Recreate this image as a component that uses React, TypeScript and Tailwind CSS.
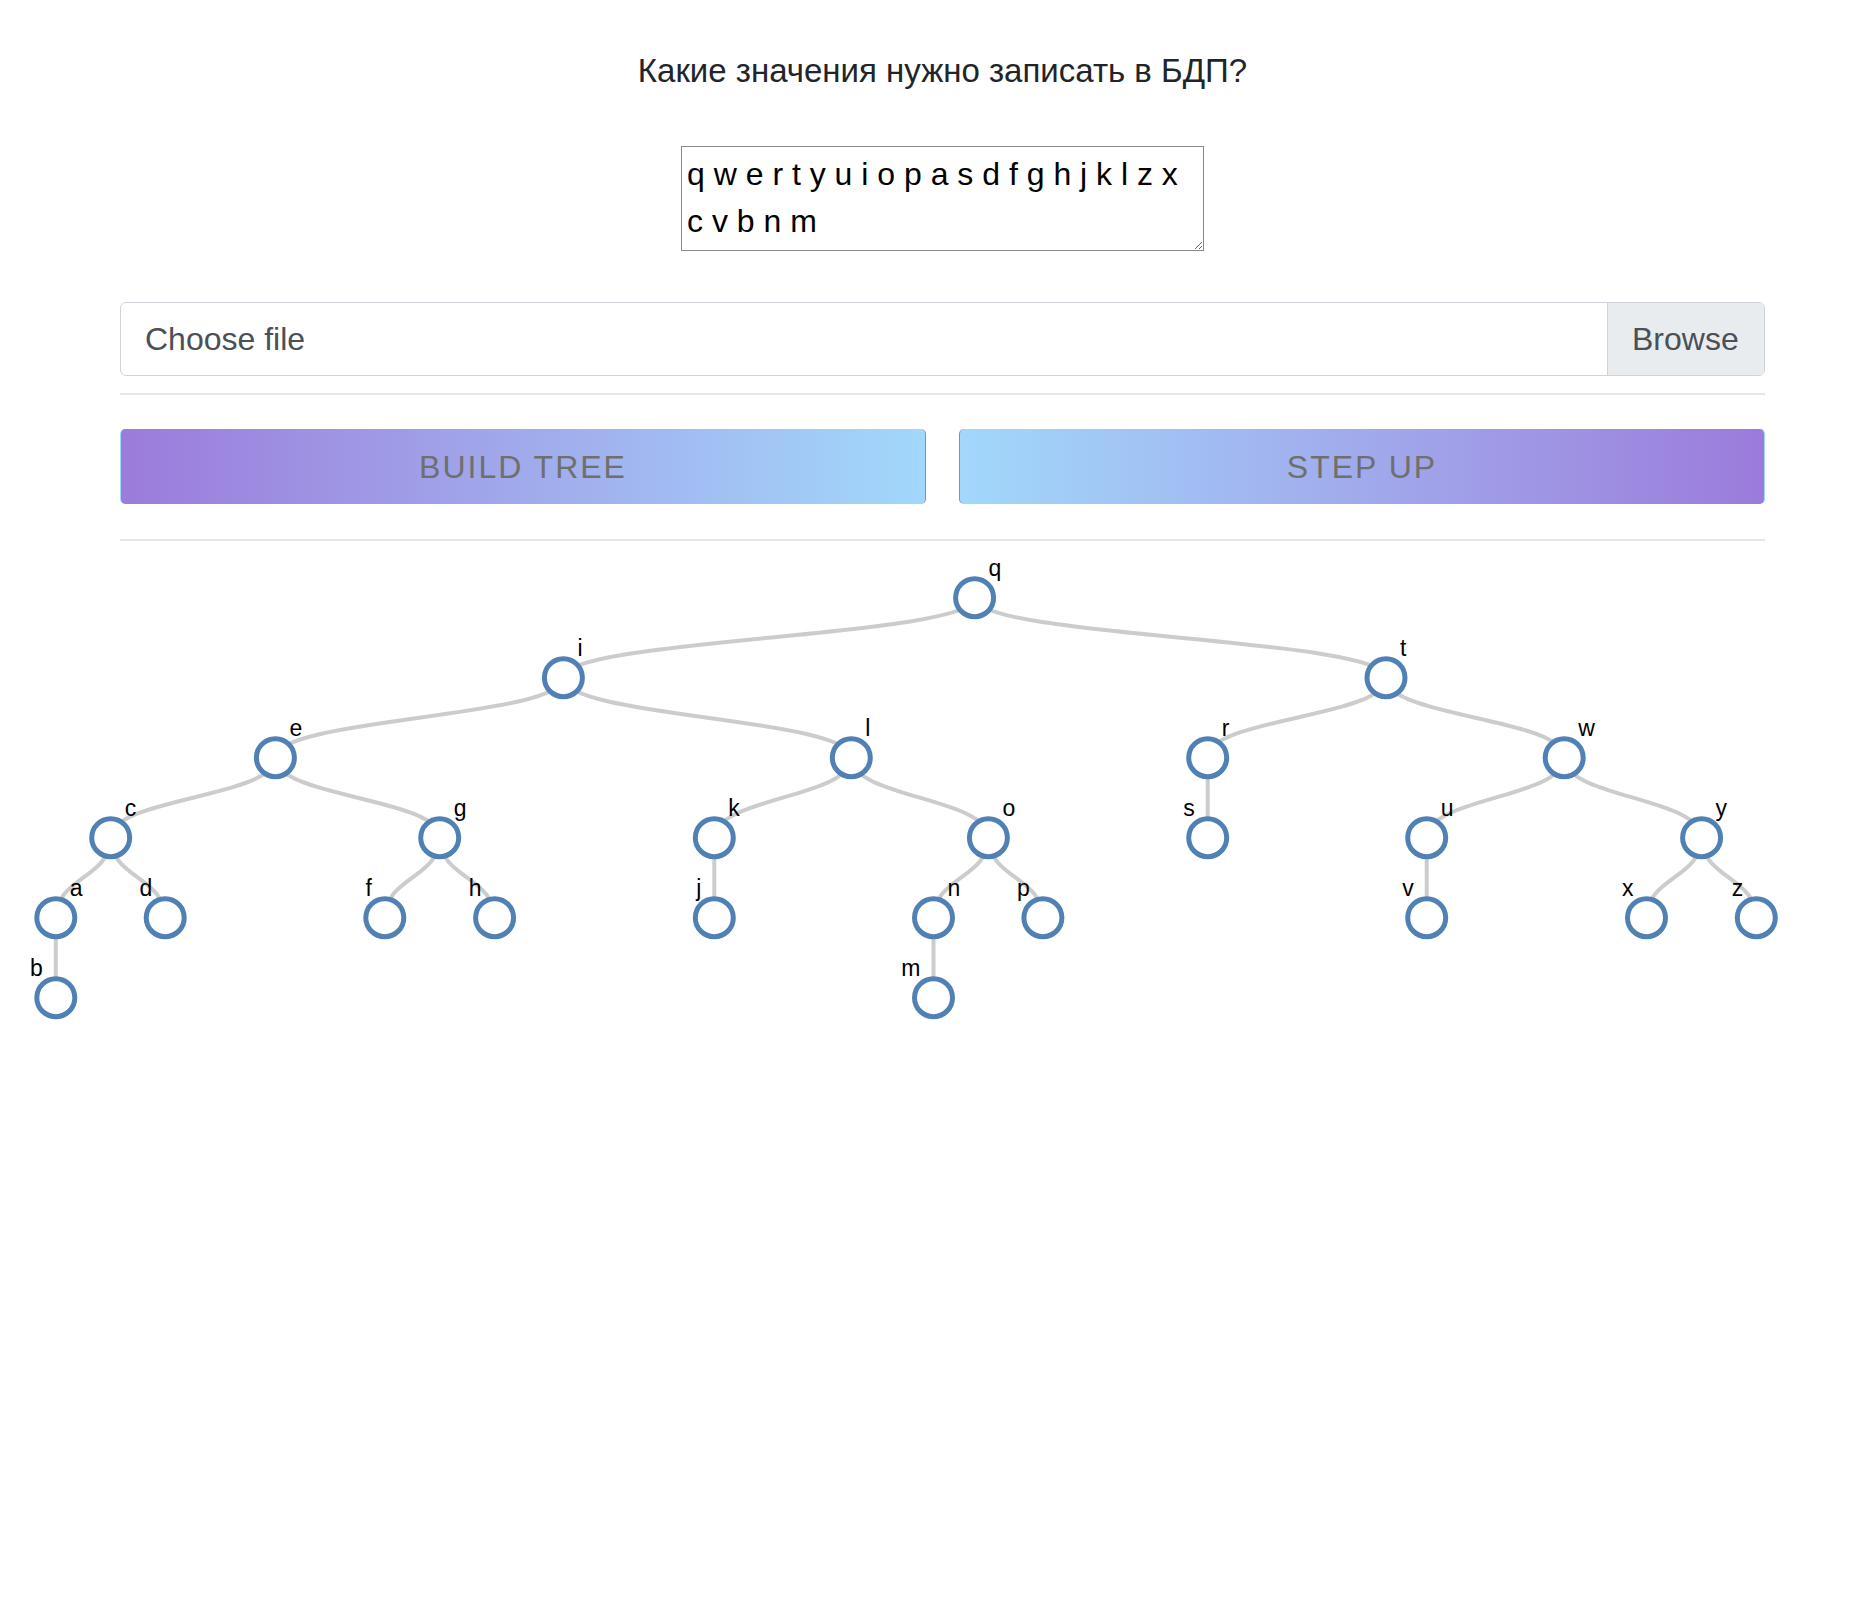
type TreeNode = { id: string; x: number; y: number; parent?: string };

const levels = [596.7, 676.7, 756.7, 836.7, 916.7, 996.7];

const nodes: TreeNode[] = [
  { id: 'q', x: 974.6, y: levels[0] },
  { id: 'i', x: 563.4, y: levels[1], parent: 'q' },
  { id: 't', x: 1386, y: levels[1], parent: 'q' },
  { id: 'e', x: 275.4, y: levels[2], parent: 'i' },
  { id: 'l', x: 851.3, y: levels[2], parent: 'i' },
  { id: 'r', x: 1207.7, y: levels[2], parent: 't' },
  { id: 'w', x: 1564.2, y: levels[2], parent: 't' },
  { id: 'c', x: 110.7, y: levels[3], parent: 'e' },
  { id: 'g', x: 439.7, y: levels[3], parent: 'e' },
  { id: 'k', x: 714.3, y: levels[3], parent: 'l' },
  { id: 'o', x: 988.4, y: levels[3], parent: 'l' },
  { id: 's', x: 1207.7, y: levels[3], parent: 'r' },
  { id: 'u', x: 1426.7, y: levels[3], parent: 'w' },
  { id: 'y', x: 1701.6, y: levels[3], parent: 'w' },
  { id: 'a', x: 55.8, y: levels[4], parent: 'c' },
  { id: 'd', x: 165.2, y: levels[4], parent: 'c' },
  { id: 'f', x: 384.8, y: levels[4], parent: 'g' },
  { id: 'h', x: 494.6, y: levels[4], parent: 'g' },
  { id: 'j', x: 714.3, y: levels[4], parent: 'k' },
  { id: 'n', x: 933.5, y: levels[4], parent: 'o' },
  { id: 'p', x: 1042.9, y: levels[4], parent: 'o' },
  { id: 'v', x: 1426.7, y: levels[4], parent: 'u' },
  { id: 'x', x: 1646.5, y: levels[4], parent: 'y' },
  { id: 'z', x: 1756.3, y: levels[4], parent: 'y' },
  { id: 'b', x: 55.8, y: levels[5], parent: 'a' },
  { id: 'm', x: 933.5, y: levels[5], parent: 'n' },
];

// the svg starts right under the second rule; node coords are page coords
const SVG_TOP = 540;

function Tree() {
  const byId = new Map(nodes.map((n) => [n.id, n]));
  const hasChildren = (id: string) => nodes.some((n) => n.parent === id);

  return (
    <svg
      className="block"
      width={1859}
      height={520}
      viewBox={`0 ${SVG_TOP} 1859 520`}
      fontFamily="'Liberation Sans', Arial, sans-serif"
    >
      {nodes
        .filter((n) => n.parent)
        .map((n) => {
          const p = byId.get(n.parent!)!;
          const my = (p.y + n.y) / 2;
          return (
            <path
              key={'l' + n.id}
              d={`M${p.x},${p.y}C${p.x},${my} ${n.x},${my} ${n.x},${n.y}`}
              fill="none"
              stroke="#cccccc"
              strokeWidth={4}
            />
          );
        })}
      {nodes.map((n) => {
        const inner = hasChildren(n.id);
        return (
          <g key={n.id} transform={`translate(${n.x},${n.y})`}>
            <circle r={19} fill="#fff" stroke="#5181b4" strokeWidth={5} />
            <text
              x={inner ? 14 : -13}
              y={-22}
              textAnchor={inner ? 'start' : 'end'}
              fontSize={23}
              fill="#000"
            >
              {n.id}
            </text>
          </g>
        );
      })}
    </svg>
  );
}

export default function App() {
  return (
    <div className="min-h-screen bg-white font-['Liberation_Sans',Arial,sans-serif]">
      <div className="ml-[120px] flex w-[1645px] flex-col pt-[52px]">
        <h2 className="text-center text-[33px] leading-[38px] text-[#212529]">
          Какие значения нужно записать в БДП?
        </h2>

        <textarea
          className="mx-auto mt-[56px] block h-[105px] w-[523px] border border-[#8a8a8a] pt-[4px] pr-[24px] pl-[5px] text-[32px] leading-[47px] text-black outline-none"
          defaultValue="q w e r t y u i o p a s d f g h j k l z x c v b n m"
        />

        <div className="mt-[51px] flex h-[74px] overflow-hidden rounded-[6px] border border-[#ced4da]">
          <div className="flex flex-1 items-center pl-[24px] text-[32px] text-[#495057]">
            Choose file
          </div>
          <div className="flex w-[157px] items-center border-l border-[#ced4da] bg-[#e9ecef] pl-[24px] text-[32px] text-[#495057]">
            Browse
          </div>
        </div>

        <hr className="mt-[17px] border-t-2 border-[#e6e6e6]" />

        <div className="mt-[34px] flex gap-[33px]">
          <button className="flex h-[75px] flex-1 items-center justify-center rounded-[5px] border-x border-l-[#a1d8fb] border-r-[#9b7bdb] bg-linear-to-r from-[#9b7bdb] to-[#a1d8fb] text-[32px] tracking-[2px] text-[#6f6f6f] uppercase">
            Build tree
          </button>
          <button className="flex h-[75px] flex-1 items-center justify-center rounded-[5px] border-x border-l-[#9b7bdb] border-r-[#a1d8fb] bg-linear-to-r from-[#a1d8fb] to-[#9b7bdb] text-[32px] tracking-[2px] text-[#6f6f6f] uppercase">
            Step up
          </button>
        </div>

        <hr className="mt-[35px] border-t-2 border-[#e6e6e6]" />
      </div>

      <Tree />
    </div>
  );
}
